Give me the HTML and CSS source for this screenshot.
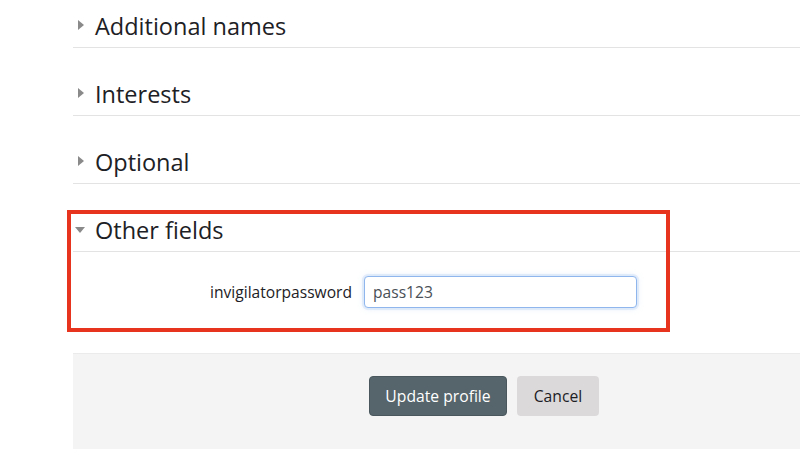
FILE: index.html
```html
<!DOCTYPE html>
<html lang="en">
<head>
<meta charset="utf-8">
<title>Edit profile</title>
<link rel="stylesheet" href="styles.css">
</head>
<body>
<div class="page">
  <section class="section collapsed">
    <h3 class="section-head"><span class="caret caret-right"></span>Additional names</h3>
  </section>
  <section class="section collapsed">
    <h3 class="section-head"><span class="caret caret-right"></span>Interests</h3>
  </section>
  <section class="section collapsed">
    <h3 class="section-head"><span class="caret caret-right"></span>Optional</h3>
  </section>
  <section class="section expanded highlighted">
    <h3 class="section-head"><span class="caret caret-down"></span>Other fields</h3>
    <div class="form-row">
      <label class="form-label" for="pw">invigilatorpassword</label>
      <input class="form-input" id="pw" type="text" value="pass123">
    </div>
  </section>
  <div class="form-footer">
    <button class="btn btn-primary" type="button">Update profile</button>
    <button class="btn btn-secondary" type="button">Cancel</button>
  </div>
</div>
</body>
</html>
```

FILE: styles.css
```css
html, body {
  margin: 0;
  padding: 0;
  background: #ffffff;
}

body {
  font-family: "Open Sans", "Liberation Sans", sans-serif;
  color: #1d2125;
  overflow: hidden;
}

.page {
  padding-left: 73px;
  padding-top: 10px;
}

.section {
  position: relative;
  margin-top: 30px;
}

.section:first-child {
  margin-top: 0;
}

.section-head {
  margin: 0;
  font-size: 23.5px;
  font-weight: 400;
  line-height: 32px;
  padding-bottom: 5px;
  border-bottom: 1px solid #e3e3e3;
  display: flex;
  align-items: center;
}

.caret {
  display: inline-block;
  width: 22px;
  height: 12px;
  position: relative;
  flex: none;
}

.caret-right::before {
  content: "";
  position: absolute;
  left: 5px;
  top: 0px;
  border-left: 6px solid #8a8a8a;
  border-top: 5.5px solid transparent;
  border-bottom: 5.5px solid transparent;
}

.caret-down::before {
  content: "";
  position: absolute;
  left: 2px;
  top: 3px;
  border-top: 6px solid #8a8a8a;
  border-left: 5.5px solid transparent;
  border-right: 5.5px solid transparent;
}

.highlighted::after {
  content: "";
  position: absolute;
  top: -4px;
  left: -6px;
  width: 603px;
  height: 122px;
  box-sizing: border-box;
  border: 4px solid #e6341f;
  pointer-events: none;
}

.form-row {
  display: flex;
  align-items: center;
  padding-top: 24px;
}

.form-label {
  width: 291px;
  flex: none;
  text-align: right;
  padding-right: 12px;
  box-sizing: border-box;
  font-size: 15.6px;
  color: #1d2125;
}

.form-input {
  width: 273px;
  flex: none;
  height: 32px;
  box-sizing: border-box;
  border: 1px solid #8fb7ee;
  border-radius: 4px;
  box-shadow: 0 0 0 2px rgba(143, 183, 238, 0.18), 0 0 6px rgba(143, 183, 238, 0.35);
  padding: 0 8px;
  font-family: "Open Sans", "Liberation Sans", sans-serif;
  font-size: 15.6px;
  color: #495057;
  outline: none;
  background: #fff;
}

.form-footer {
  margin-top: 45px;
  background: #f4f4f4;
  border-top: 1px solid #ebebeb;
  height: 96px;
  box-sizing: border-box;
  padding-left: 296px;
  padding-top: 22px;
  display: flex;
  align-items: flex-start;
  gap: 10px;
}

.btn {
  height: 40px;
  border: none;
  border-radius: 4px;
  font-family: "Open Sans", "Liberation Sans", sans-serif;
  font-size: 15.7px;
  padding: 0;
  cursor: pointer;
}

.btn-primary {
  background: #56656b;
  color: #ffffff;
  width: 138px;
  border: 1px solid #4a585e;
}

.btn-secondary {
  background: #dbd9da;
  color: #1d2125;
  width: 82px;
}
```
